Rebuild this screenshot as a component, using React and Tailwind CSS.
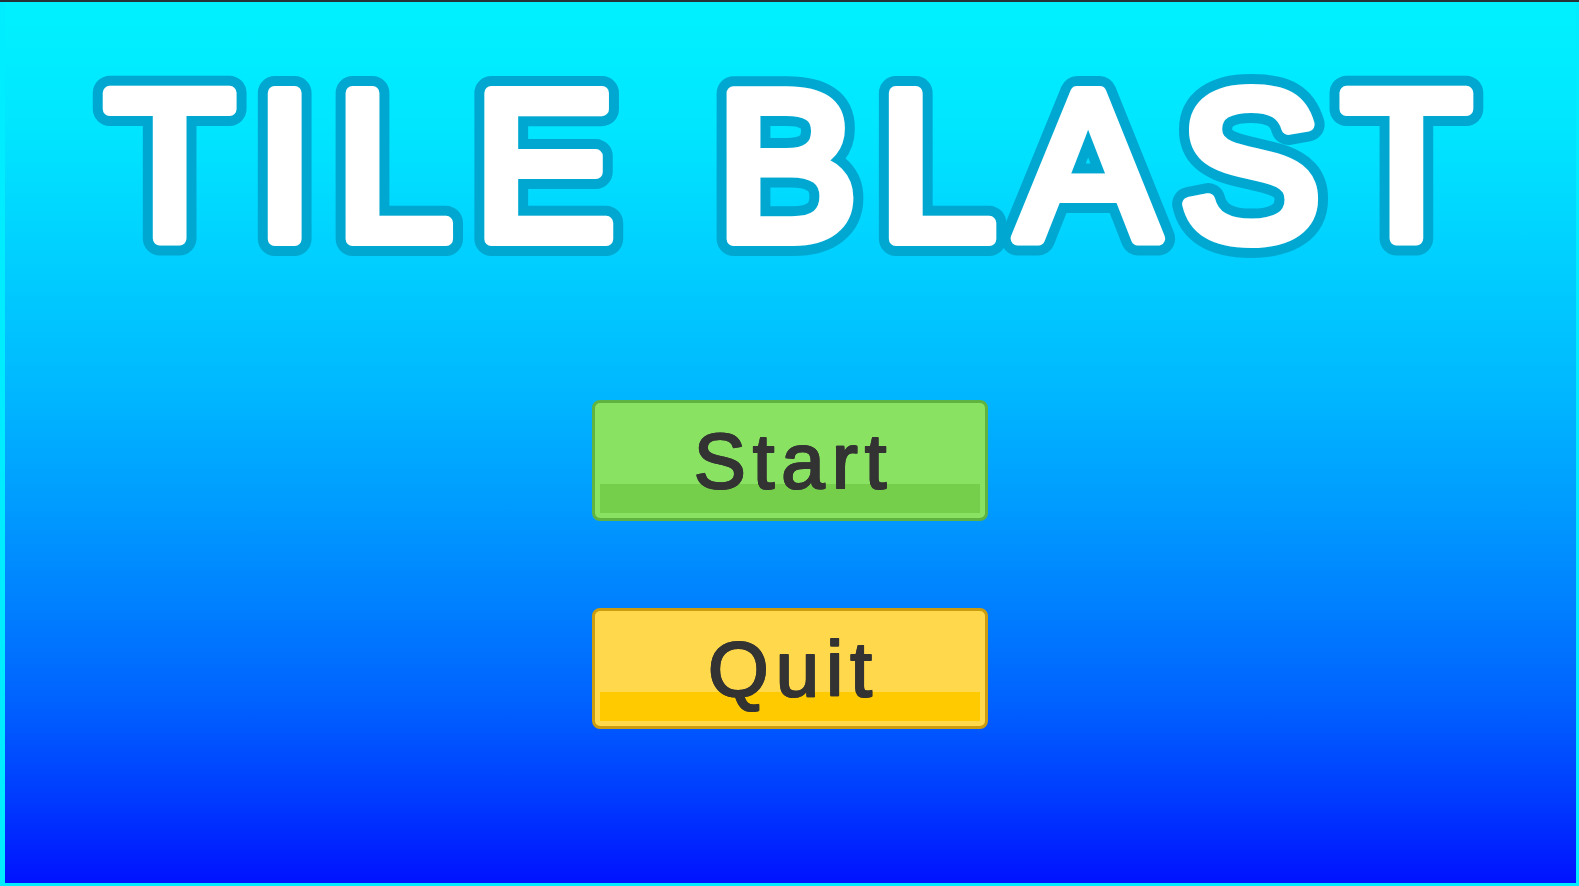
import React from 'react';

const menuItems = [
  {
    label: 'Start',
    frame: 'border-[#5fb441] bg-[#8ae262]',
    shade: 'bg-[#75cf4b]',
  },
  {
    label: 'Quit',
    frame: 'border-[#cb9b10] bg-[#ffd84c]',
    shade: 'bg-[#ffcb00]',
  },
];

function Title() {
  return (
    <h1 className="w-full">
      <svg viewBox="0 0 1572 200" className="block w-full" strokeLinejoin="round">
        <defs>
          <text
            id="title-text"
            x="100"
            y="179"
            className="font-['Liberation_Sans',sans-serif] text-[212px] tracking-[21px]"
          >
            TILE BLAST
          </text>
        </defs>
        {/* outline first, then the thick white letters on top */}
        <use href="#title-text" stroke="#00a8d1" strokeWidth="34" />
        <use href="#title-text" fill="#ffffff" stroke="#ffffff" strokeWidth="14" />
      </svg>
    </h1>
  );
}

function MenuButton({ label, frame, shade }) {
  return (
    <button
      type="button"
      className={`relative isolate flex h-[121px] w-[396px] max-w-full items-center justify-center rounded-lg border-[3px] pt-[2px] pl-2 font-['Liberation_Sans',sans-serif] text-[78px] leading-none tracking-[7px] text-[#333333] ${frame}`}
    >
      <span className={`absolute inset-x-[5px] bottom-[5px] -z-10 h-[29px] ${shade}`} />
      <span className="[-webkit-text-stroke:2px_#333] [text-shadow:1px_0_#333,-1px_0_#333,0_1px_#333,0_-1px_#333]">
        {label}
      </span>
    </button>
  );
}

function App() {
  return (
    <div className="flex min-h-screen flex-col border-t-2 border-[#263238] bg-[#00ecff] pr-[3px] pb-[3px] pl-[5px]">
      <main className="flex flex-1 flex-col items-center bg-[linear-gradient(to_bottom,#00f0ff_2%,#00e6ff_14%,#00baff_43%,#009cff_57%,#007cff_70%,#0060ff_80%,#003cff_90%,#0012ff_100%)] pt-[58px]">
        <Title />
        <div className="mt-[140px] flex w-full flex-col items-center gap-[87px] pr-[2px]">
          {menuItems.map((item) => (
            <MenuButton key={item.label} {...item} />
          ))}
        </div>
      </main>
    </div>
  );
}

export default App;
